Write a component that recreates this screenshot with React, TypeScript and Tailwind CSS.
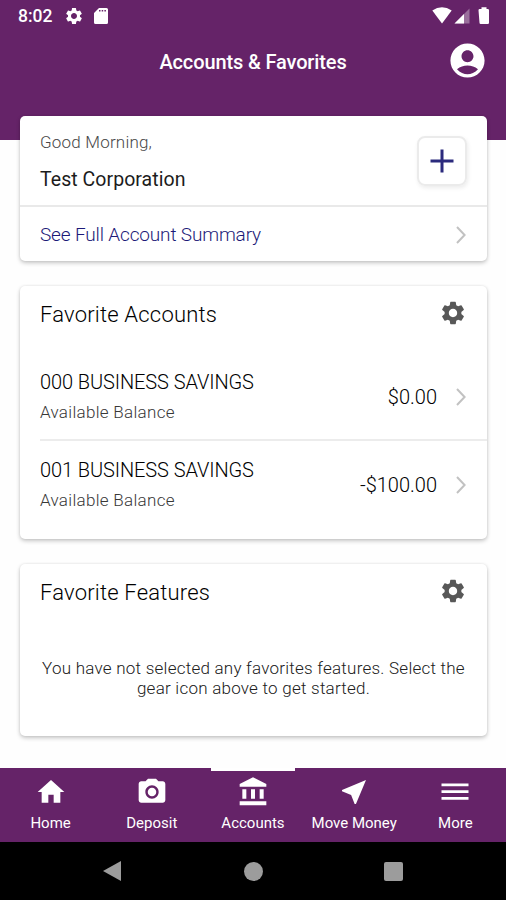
import type { ReactNode } from "react";
import {
  MdAccountBalance,
  MdAccountCircle,
  MdHome,
  MdNearMe,
  MdPhotoCamera,
  MdSettings,
} from "react-icons/md";

const accounts = [
  { name: "000 BUSINESS SAVINGS", balance: "$0.00" },
  { name: "001 BUSINESS SAVINGS", balance: "-$100.00" },
];

const MenuIcon = () => (
  <svg width="32" height="32" viewBox="0 0 32 32" fill="currentColor">
    <path d="M2.5 7.4h27v2.8h-27zM2.5 14.3h27v2.8h-27zM2.5 21h27v2.8h-27z" />
  </svg>
);

const tabs = [
  { label: "Home", icon: <MdHome size={32} /> },
  { label: "Deposit", icon: <MdPhotoCamera size={32} /> },
  { label: "Accounts", icon: <MdAccountBalance size={32} />, active: true },
  { label: "Move Money", icon: <MdNearMe size={32} /> },
  { label: "More", icon: <MenuIcon /> },
];

function Chevron() {
  return (
    <svg width="10" height="18" viewBox="0 0 10 18" fill="none" stroke="#c2c2c2" strokeWidth="2">
      <path d="M1 1l7.6 8L1 17" />
    </svg>
  );
}

function Card({ className, children }: { className: string; children: ReactNode }) {
  return (
    <section
      className={`ml-5 w-[467px] shrink-0 rounded-[5px] bg-white shadow-[0_2px_4px_rgba(0,0,0,0.22),0_0_3px_rgba(0,0,0,0.08)] ${className}`}
    >
      {children}
    </section>
  );
}

function CardTitle({ title }: { title: string }) {
  return (
    <div className="flex h-[55px] items-center justify-between pr-5 pl-5">
      <h2 className="pt-0.5 text-[22px] font-light tracking-[0.2px] text-black">{title}</h2>
      <MdSettings size={28} className="mb-px text-[#585858]" />
    </div>
  );
}

function StatusBar() {
  return (
    <div className="flex h-8 items-center pr-4 pl-[18px]">
      <span className="w-[34px] text-[17.5px] font-medium">8:02</span>
      <MdSettings size={20} className="ml-3" />
      <svg width="14" height="16" viewBox="0 0 14 16" fill="currentColor" className="ml-[10px]">
        <path
          fillRule="evenodd"
          d="M5 0h7.5Q14 0 14 1.5v13q0 1.5-1.5 1.5h-11Q0 16 0 14.5V5zM5 2v1.4h1.5V2zM7.7 2v1.4h1.5V2zM10.4 2v1.4h1.5V2z"
        />
      </svg>
      <svg width="58" height="18" viewBox="0 0 58 18" fill="currentColor" className="ml-auto">
        <path d="M0.3 3.5Q10 -3 19.7 3.5L10 16.5z" />
        <path d="M37.5 1.5v15h-15z" opacity=".35" />
        <path d="M32 7V16.5h-9.5z" />
        <path d="M46.5 3.2q0-1.2 1.2-1.2h1.8V.3h5V2h1.3q1.2 0 1.2 1.2v12.6q0 1.2-1.2 1.2h-7.1q-1.2 0-1.2-1.2z" />
      </svg>
    </div>
  );
}

export default function App() {
  return (
    <div className="flex h-[900px] w-[506px] flex-col overflow-hidden bg-[#fefefe] font-['Roboto',sans-serif]">
      <header className="h-[140px] shrink-0 bg-[#652368] text-white">
        <StatusBar />
        <div className="grid h-[60px] grid-cols-[60px_1fr_60px] items-center">
          <h1 className="col-start-2 text-center text-[20px] font-medium tracking-[-0.13px]">
            Accounts &amp; Favorites
          </h1>
          <MdAccountCircle size={41} className="ml-px mb-[3px]" />
        </div>
      </header>

      <Card className="-mt-6 h-[145px]">
        <div className="flex h-[91px] items-center justify-between border-b-2 border-[#e9e9e9] pr-5 pl-5">
          <div>
            <p className="text-[17px] leading-[28px] font-light tracking-[0.2px] text-[#484848]">Good Morning,</p>
            <p className="pt-2.5 text-[19.5px] leading-[28px] font-normal tracking-[0.05px] text-[#1c1c1c]">
              Test Corporation
            </p>
          </div>
          <button className="flex size-[50px] items-center justify-center rounded-lg border-2 border-[#ebebeb] shadow-[1px_2px_4px_rgba(0,0,0,0.08)]">
            <svg width="24" height="24" viewBox="0 0 24 24" stroke="#2b2a7d" strokeWidth="3">
              <path d="M12 .5v23M.5 12h23" />
            </svg>
          </button>
        </div>
        <a className="flex h-[54px] items-center justify-between pt-0.5 pr-[21px] pl-5 text-[19px] font-light tracking-[-0.15px] text-[#1c1a78]">
          See Full Account Summary
          <Chevron />
        </a>
      </Card>

      <Card className="mt-[25px] h-[253px]">
        <CardTitle title="Favorite Accounts" />
        <ul className="ml-5 pt-3">
          {accounts.map((account) => (
            <li
              key={account.name}
              className="flex h-[88px] items-center border-[#ececec] pr-[21px] not-last:border-b-2 not-last:pt-0.5"
            >
              <div className="grow">
                <p className="text-[20px] leading-[30px] font-light tracking-[-0.1px] text-black">
                  {account.name}
                </p>
                <p className="text-[17px] leading-[30px] font-light tracking-[0.3px] text-[#383838]">
                  Available Balance
                </p>
              </div>
              <span className="mr-[19px] text-[20px] font-light text-black">{account.balance}</span>
              <Chevron />
            </li>
          ))}
        </ul>
      </Card>

      <Card className="mt-[25px] h-[172px]">
        <CardTitle title="Favorite Features" />
        <p className="pt-[39px] text-center text-[17px] leading-5 font-light tracking-[0.24px] whitespace-nowrap text-[#202020]">
          You have not selected any favorites features. Select the
          <br />
          gear icon above to get started.
        </p>
      </Card>

      <nav className="mt-auto grid h-[74px] shrink-0 grid-cols-5 bg-[#652368] text-white">
        {tabs.map((tab) => (
          <a key={tab.label} className="flex flex-col items-center">
            <span className={tab.active ? "h-[3px] w-[84px] bg-white" : "h-[3px]"} />
            <span className="pt-[5px]">{tab.icon}</span>
            <span className="text-[15px] leading-[30px] whitespace-nowrap">{tab.label}</span>
          </a>
        ))}
      </nav>

      <div className="grid h-[58px] shrink-0 grid-cols-[122px_1fr_122px] items-center bg-black text-[#9c9c9c]">
        <svg width="20" height="22" viewBox="0 0 20 22" fill="currentColor" className="ml-[102px]">
          <path d="M19 1v20L1 11z" />
        </svg>
        <span className="size-[19px] justify-self-center rounded-full bg-current" />
        <span className="size-[19px] rounded-[2px] bg-current" />
      </div>
    </div>
  );
}
